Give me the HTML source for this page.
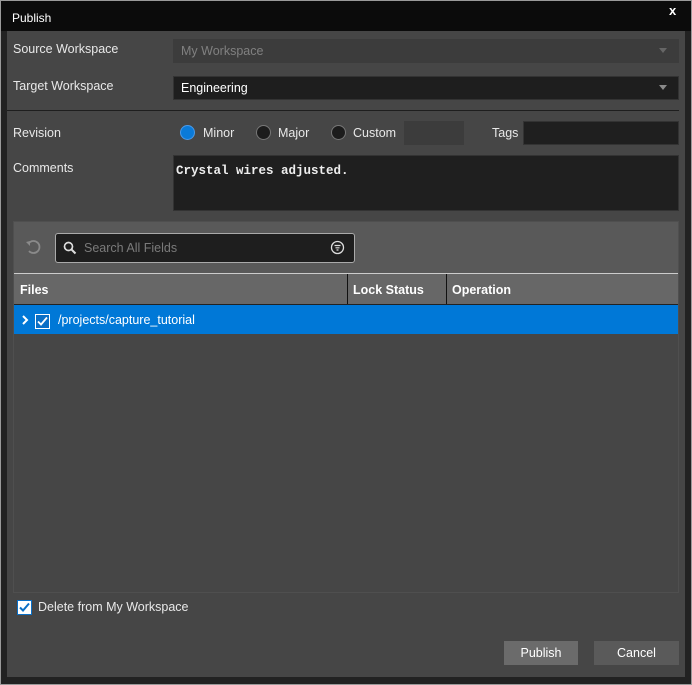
<!DOCTYPE html>
<html><head><style>
*{margin:0;padding:0;box-sizing:border-box}
body{width:692px;height:685px;background:#9a9a9a;font-family:"Liberation Sans",sans-serif;font-size:12.5px;color:#e8e8e8;position:relative;overflow:hidden}
.a{position:absolute}
.frame{left:1px;top:1px;width:690px;height:683px;background:#222}
.title{left:1px;top:1px;width:690px;height:30px;background:#0b0b0b}
.main{left:7px;top:31px;width:678px;height:646px;background:#464646}
.inp{background:#1f1f1f}
.arrow{width:0;height:0;border-left:4px solid transparent;border-right:4px solid transparent;border-top:5px solid #8a8a8a}
.radio{width:15px;height:15px;border-radius:50%;border:1px solid #777;background:#1c1c1c}
</style></head><body>
<div class="a frame"></div>
<div class="a title"></div>
<div class="a" style="left:12px;top:11px;font-size:12px;color:#fff">Publish</div>
<div class="a" style="left:669px;top:3px;font-size:13px;font-weight:bold;color:#fff">x</div>
<div class="a main"></div>
<div class="a" style="left:13px;top:42px">Source Workspace</div>
<div class="a" style="left:173px;top:39px;width:506px;height:24px;background:#3c3c3c"></div>
<div class="a" style="left:181px;top:44px;color:#808080">My Workspace</div>
<div class="a arrow" style="left:659px;top:48px;border-top-color:#666"></div>
<div class="a" style="left:13px;top:79px">Target Workspace</div>
<div class="a inp" style="left:173px;top:76px;width:506px;height:24px;background:#1e1e1e;border:1px solid #333"></div>
<div class="a" style="left:181px;top:81px;color:#fff">Engineering</div>
<div class="a arrow" style="left:659px;top:85px"></div>
<div class="a" style="left:7px;top:110px;width:672px;height:1px;background:#1e1e1e"></div>
<div class="a" style="left:13px;top:126px">Revision</div>
<div class="a radio" style="left:180px;top:125px;background:#0a7ad8;border-color:#4a9ae8"></div>
<div class="a" style="left:203px;top:126px">Minor</div>
<div class="a radio" style="left:256px;top:125px"></div>
<div class="a" style="left:278px;top:126px">Major</div>
<div class="a radio" style="left:331px;top:125px"></div>
<div class="a" style="left:353px;top:126px">Custom</div>
<div class="a" style="left:404px;top:121px;width:60px;height:24px;background:#3c3c3c"></div>
<div class="a" style="left:492px;top:126px">Tags</div>
<div class="a inp" style="left:523px;top:121px;width:156px;height:24px;border:1px solid #333"></div>
<div class="a" style="left:13px;top:161px">Comments</div>
<div class="a inp" style="left:173px;top:155px;width:506px;height:56px;border:1px solid #333"></div>
<div class="a" style="left:176px;top:164px;font-family:'Liberation Mono',monospace;font-size:12.5px;color:#eee;font-weight:bold">Crystal wires adjusted.</div>
<div class="a" style="left:13px;top:221px;width:666px;height:372px;background:#595959;border:1px solid #4f4f4f"></div>
<svg class="a" style="left:24px;top:237px" width="20" height="20" viewBox="0 0 20 20"><path d="M5 6 A6 6 0 1 1 5 14" fill="none" stroke="#8a8a8a" stroke-width="1.8"/><path d="M2 5 L6 4 L6 9 Z" fill="#8a8a8a"/></svg>
<div class="a" style="left:55px;top:233px;width:300px;height:30px;background:#1e1e1e;border:1px solid #aaa;border-radius:3px"></div>
<svg class="a" style="left:63px;top:241px" width="14" height="14"><circle cx="5.5" cy="5.5" r="4" fill="none" stroke="#ddd" stroke-width="1.7"/><path d="M8.5 8.5L12.5 12.5" stroke="#ddd" stroke-width="2"/></svg>
<div class="a" style="left:84px;top:241px;color:#7a7a7a">Search All Fields</div>
<svg class="a" style="left:330px;top:240px" width="15" height="15"><circle cx="7.5" cy="7.5" r="6" fill="none" stroke="#ddd" stroke-width="1.3"/><path d="M4.5 5.5h6M5.5 7.8h4M6.5 10h2" stroke="#ddd" stroke-width="1.2"/></svg>
<div class="a" style="left:14px;top:273px;width:664px;height:1px;background:#ccc"></div>
<div class="a" style="left:14px;top:274px;width:664px;height:30px;background:#676767"></div>
<div class="a" style="left:347px;top:274px;width:1px;height:30px;background:#111"></div>
<div class="a" style="left:446px;top:274px;width:1px;height:30px;background:#111"></div>
<div class="a" style="left:20px;top:283px;font-weight:bold;color:#fff">Files</div>
<div class="a" style="left:353px;top:283px;font-weight:bold;color:#fff">Lock Status</div>
<div class="a" style="left:452px;top:283px;font-weight:bold;color:#fff">Operation</div>
<div class="a" style="left:14px;top:304px;width:664px;height:1px;background:#222"></div>
<div class="a" style="left:14px;top:305px;width:664px;height:29px;background:#0078d7"></div>
<div class="a" style="left:14px;top:334px;width:664px;height:258px;background:#464646"></div>
<svg class="a" style="left:20px;top:314px" width="10" height="12"><path d="M3 2l4 4-4 4" fill="none" stroke="#fff" stroke-width="2"/></svg>
<div class="a" style="left:35px;top:314px;width:15px;height:15px;border:1px solid #fff;background:#0a6fc6"></div>
<svg class="a" style="left:35px;top:314px" width="15" height="15"><path d="M3 7.5l3 3 6-7" fill="none" stroke="#fff" stroke-width="1.8"/></svg>
<div class="a" style="left:58px;top:313px;color:#fff">/projects/capture_tutorial</div>
<div class="a" style="left:17px;top:600px;width:15px;height:15px;background:#fff;border:1px solid #0a6fc6"></div>
<svg class="a" style="left:17px;top:600px" width="15" height="15"><path d="M3 7.5l3 3 6-7" fill="none" stroke="#0a6fc6" stroke-width="2"/></svg>
<div class="a" style="left:38px;top:600px">Delete from My Workspace</div>
<div class="a" style="left:504px;top:641px;width:74px;height:24px;background:#6b6b6b;text-align:center;line-height:24px;color:#fff">Publish</div>
<div class="a" style="left:594px;top:641px;width:85px;height:24px;background:#5a5a5a;text-align:center;line-height:24px;color:#fff">Cancel</div>
</body></html>
